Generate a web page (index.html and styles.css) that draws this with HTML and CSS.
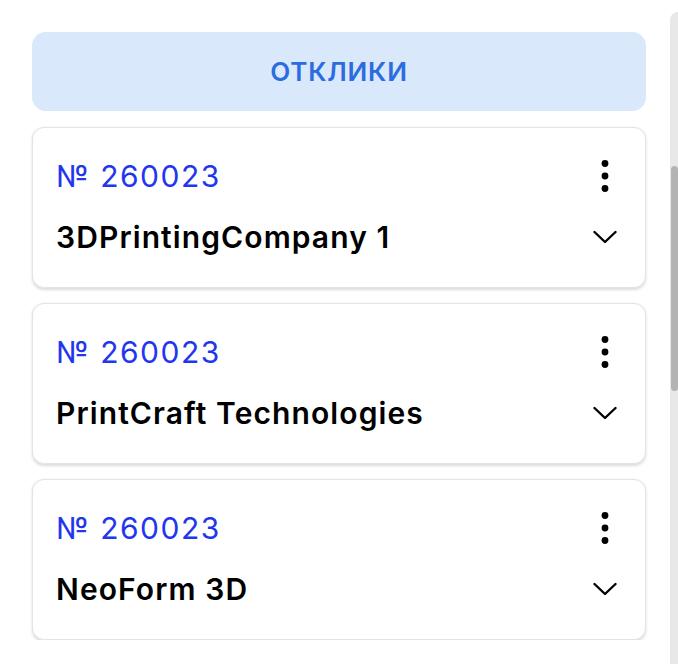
FILE: index.html
```html
<!DOCTYPE html>
<html lang="ru">
<head>
<meta charset="utf-8">
<title>Отклики</title>
<link rel="stylesheet" href="styles.css">
</head>
<body>
<main class="list">
  <button class="tab-btn" type="button">Отклики</button>

  <article class="card">
    <div class="row">
      <span class="num">№ 260023</span>
      <svg class="icon" width="24" height="32" viewBox="0 0 24 32" aria-hidden="true"><circle cx="12" cy="3.5" r="3.4"/><circle cx="12" cy="16" r="3.4"/><circle cx="12" cy="28.5" r="3.4"/></svg>
    </div>
    <div class="row">
      <span class="name">3DPrintingCompany 1</span>
      <svg class="icon" width="24" height="16" viewBox="0 0 24 16" aria-hidden="true"><path d="M1.5 3 L12 13 L22.5 3" fill="none" stroke="#000" stroke-width="2.4" stroke-linecap="round" stroke-linejoin="round"/></svg>
    </div>
  </article>

  <article class="card">
    <div class="row">
      <span class="num">№ 260023</span>
      <svg class="icon" width="24" height="32" viewBox="0 0 24 32" aria-hidden="true"><circle cx="12" cy="3.5" r="3.4"/><circle cx="12" cy="16" r="3.4"/><circle cx="12" cy="28.5" r="3.4"/></svg>
    </div>
    <div class="row">
      <span class="name">PrintCraft Technologies</span>
      <svg class="icon" width="24" height="16" viewBox="0 0 24 16" aria-hidden="true"><path d="M1.5 3 L12 13 L22.5 3" fill="none" stroke="#000" stroke-width="2.4" stroke-linecap="round" stroke-linejoin="round"/></svg>
    </div>
  </article>

  <article class="card">
    <div class="row">
      <span class="num">№ 260023</span>
      <svg class="icon" width="24" height="32" viewBox="0 0 24 32" aria-hidden="true"><circle cx="12" cy="3.5" r="3.4"/><circle cx="12" cy="16" r="3.4"/><circle cx="12" cy="28.5" r="3.4"/></svg>
    </div>
    <div class="row">
      <span class="name">NeoForm 3D</span>
      <svg class="icon" width="24" height="16" viewBox="0 0 24 16" aria-hidden="true"><path d="M1.5 3 L12 13 L22.5 3" fill="none" stroke="#000" stroke-width="2.4" stroke-linecap="round" stroke-linejoin="round"/></svg>
    </div>
  </article>
</main>
<div class="scrollbar" aria-hidden="true"><div class="thumb"></div></div>
</body>
</html>
```
FILE: styles.css
```css
html, body {
  margin: 0;
  padding: 0;
  background: #ffffff;
  overflow: hidden;
}
body {
  font-family: Inter, "Noto Sans", "Liberation Sans", sans-serif;
  color: #000;
}
.list {
  width: 614px;
  padding: 32px 0 0 32px;
  display: flex;
  flex-direction: column;
  gap: 15px;
}
.tab-btn {
  height: 79px;
  border: 0;
  border-radius: 14px;
  background: #dae8fc;
  color: #2c6ce0;
  font-family: inherit;
  font-size: 26px;
  font-weight: 600;
  text-transform: uppercase;
  letter-spacing: 0.8px;
  margin-bottom: 1px;
  padding: 0;
}
.card {
  border: 1px solid #e4e4e4;
  border-radius: 12px;
  box-shadow: 0 1.5px 3px rgba(0, 0, 0, 0.14);
  padding: 30px 28px 32px 23px;
  display: flex;
  flex-direction: column;
  gap: 25px;
  background: #fff;
}
.row {
  height: 36px;
  display: flex;
  align-items: center;
  justify-content: space-between;
}
.num {
  font-size: 30px;
  line-height: 36px;
  letter-spacing: 1.5px;
  color: #2236ee;
  font-weight: 400;
}
.name {
  font-size: 30px;
  line-height: 36px;
  letter-spacing: 1.1px;
  font-weight: 600;
}
.icon {
  flex: none;
  fill: #000;
}
.scrollbar {
  position: fixed;
  top: 12px;
  right: 0;
  bottom: 0;
  width: 8px;
  background: #e8e8e8;
  border-top-left-radius: 8px;
}
.thumb {
  position: absolute;
  left: 1px;
  right: 0;
  top: 154px;
  height: 225px;
  background: #b3b3b3;
  border-radius: 4px;
}
```
